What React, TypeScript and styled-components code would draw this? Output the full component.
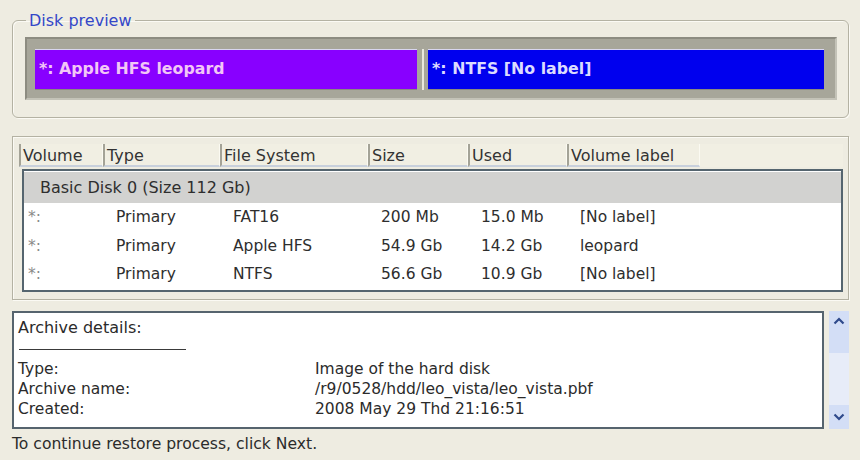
import React from "react";
import styled, { createGlobalStyle } from "styled-components";

const Global = createGlobalStyle`
  html, body { margin: 0; padding: 0; }
  body {
    background: #eeece1;
    font-family: "DejaVu Sans", Verdana, sans-serif;
    font-size: 16px;
    color: #2b2b2b;
  }
`;

const Page = styled.div`
  width: 860px;
  height: 460px;
  box-sizing: border-box;
  padding: 0 11px 0 12px;
  display: flex;
  flex-direction: column;
  overflow: hidden;
`;

const Group = styled.fieldset`
  margin: 11px 0 0 0;
  padding: 7px 11px 17px 12px;
  border: 1px solid #b4b2a3;
  box-shadow: inset 1px 1px 0 #fbfaf4, 1px 1px 0 #fbfaf4;
  border-radius: 6px;
  min-width: 0;
`;

const Legend = styled.legend`
  color: #3447c8;
  padding: 0 3px;
  margin-left: 1px;
  font-size: 16px;
  line-height: 19px;
`;

const DiskBar = styled.div`
  display: flex;
  height: 63px;
  box-sizing: border-box;
  padding: 10px 11px 8px 8px;
  background: #a7a69a;
  border-top: 2px solid #8d8c81;
  border-left: 2px solid #8d8c81;
  border-right: 2px solid #c4c3b8;
  border-bottom: 2px solid #c4c3b8;
`;

const Partition = styled.div<{ $bg: string; $fg: string; $grow: number }>`
  flex: ${(p) => p.$grow} 1 0;
  background: ${(p) => p.$bg};
  color: ${(p) => p.$fg};
  font-weight: bold;
  font-size: 15.8px;
  display: flex;
  align-items: center;
  padding: 0 4px 3px 4px;
  box-sizing: border-box;
  border-top: 1px solid #d8d6f0;
  border-bottom: 1px solid #8b8a80;
`;

const Divider = styled.div`
  width: 11px;
  flex: none;
  display: flex;
  justify-content: center;
  &::after {
    content: "";
    width: 2px;
    background: #e9e8dc;
  }
`;

const TableGroup = styled.div`
  margin-top: 18px;
  border: 1px solid #b4b2a3;
  box-shadow: inset 1px 1px 0 #fbfaf4, 1px 1px 0 #fbfaf4;
  padding: 7px 5px 7px 6px;
  height: 164px;
  box-sizing: border-box;
  display: flex;
  flex-direction: column;
`;

const cols = "84px 117px 148px 100px 99px 133px 1fr";

const Header = styled.div`
  display: grid;
  grid-template-columns: ${cols};
  height: 23px;
  flex: none;
`;

const HeadCell = styled.div<{ $empty?: boolean }>`
  box-sizing: border-box;
  padding: 2px 0 0 2px;
  font-size: 16px;
  color: #333;
  background: #f1efe3;
  border-left: ${(p) => (p.$empty ? "none" : "2px solid #a4a397")};
  border-right: ${(p) => (p.$empty ? "none" : "1px solid #fbfaf2")};
  border-bottom: ${(p) => (p.$empty ? "none" : "2px solid #c8d0dc")};
  white-space: nowrap;
  overflow: hidden;
`;

const ListBody = styled.div`
  margin: 2px 0 0 3px;
  flex: 1;
  background: #fff;
  border: 2px solid #55656f;
  padding: 1px 0 0 0;
`;

const DiskRow = styled.div`
  height: 31px;
  background: #d2d2d0;
  display: flex;
  align-items: center;
  padding-left: 16px;
  font-size: 16px;
  color: #2e2e2e;
`;

const Row = styled.div`
  display: grid;
  grid-template-columns: ${cols};
  height: 28.5px;
  align-items: center;
  font-size: 15.5px;
  color: #2e2e2e;
`;

const Cell = styled.div<{ $first?: boolean }>`
  padding-left: ${(p) => (p.$first ? "4px" : "8px")};
  white-space: nowrap;
  color: ${(p) => (p.$first ? "#8a8a8a" : "inherit")};
`;

const ArchiveRow = styled.div`
  margin-top: 11px;
  display: flex;
  gap: 5px;
  height: 118px;
`;

const ArchiveBox = styled.div`
  width: 813px;
  box-sizing: border-box;
  background: #fff;
  border: 2px solid #56646e;
  padding: 5px 4px 0 4px;
  display: flex;
  flex-direction: column;
`;

const ArchiveTitle = styled.div`
  line-height: 20px;
  font-size: 16px;
`;

const Rule = styled.div`
  width: 167px;
  height: 0;
  border-top: 1px solid #3a3a3a;
  margin: 11px 0 9px 1px;
`;

const Detail = styled.div`
  display: grid;
  grid-template-columns: 297px 1fr;
  line-height: 20px;
  font-size: 15.5px;
  white-space: nowrap;
`;

const Scroll = styled.div`
  width: 20px;
  background: #e7ecf8;
  display: flex;
  flex-direction: column;
  justify-content: space-between;
`;

const ScrollBtn = styled.div<{ $tall?: boolean }>`
  height: ${(p) => (p.$tall ? "42px" : "24px")};
  background: #d3def6;
  display: flex;
  justify-content: center;
  align-items: ${(p) => (p.$tall ? "flex-start" : "center")};
  padding-top: ${(p) => (p.$tall ? "6px" : "0")};
  box-sizing: border-box;
`;

const Footer = styled.div`
  margin-top: 6px;
  font-size: 15.6px;
  color: #2b2b2b;
`;

const Chevron = ({ up }: { up?: boolean }) => (
  <svg width="12" height="8" viewBox="0 0 12 8">
    <path
      d={up ? "M1.5 6.5 L6 2 L10.5 6.5" : "M1.5 1.5 L6 6 L10.5 1.5"}
      fill="none"
      stroke="#2f4a8c"
      strokeWidth="2.2"
    />
  </svg>
);

const rows = [
  ["*:", "Primary", "FAT16", "200 Mb", "15.0 Mb", "[No label]"],
  ["*:", "Primary", "Apple HFS", "54.9 Gb", "14.2 Gb", "leopard"],
  ["*:", "Primary", "NTFS", "56.6 Gb", "10.9 Gb", "[No label]"],
];

const heads = ["Volume", "Type", "File System", "Size", "Used", "Volume label"];

export default function App() {
  return (
    <>
      <Global />
      <Page>
        <Group>
          <Legend>Disk preview</Legend>
          <DiskBar>
            <Partition $bg="#8800ff" $fg="#f2c6f6" $grow={380}>
              *: Apple HFS leopard
            </Partition>
            <Divider />
            <Partition $bg="#0000ee" $fg="#dcdcff" $grow={394}>
              *: NTFS [No label]
            </Partition>
          </DiskBar>
        </Group>
        <TableGroup>
          <Header>
            {heads.map((h) => (
              <HeadCell key={h}>{h}</HeadCell>
            ))}
            <HeadCell $empty />
          </Header>
          <ListBody>
            <DiskRow>Basic Disk 0 (Size 112 Gb)</DiskRow>
            {rows.map((r, i) => (
              <Row key={i}>
                {r.map((c, j) => (
                  <Cell key={j} $first={j === 0}>
                    {c}
                  </Cell>
                ))}
              </Row>
            ))}
          </ListBody>
        </TableGroup>
        <ArchiveRow>
          <ArchiveBox>
            <ArchiveTitle>Archive details:</ArchiveTitle>
            <Rule />
            <Detail>
              <span>Type:</span>
              <span>Image of the hard disk</span>
              <span>Archive name:</span>
              <span>/r9/0528/hdd/leo_vista/leo_vista.pbf</span>
              <span>Created:</span>
              <span>2008 May 29 Thd 21:16:51</span>
            </Detail>
          </ArchiveBox>
          <Scroll>
            <ScrollBtn $tall>
              <Chevron up />
            </ScrollBtn>
            <ScrollBtn>
              <Chevron />
            </ScrollBtn>
          </Scroll>
        </ArchiveRow>
        <Footer>To continue restore process, click Next.</Footer>
      </Page>
    </>
  );
}
